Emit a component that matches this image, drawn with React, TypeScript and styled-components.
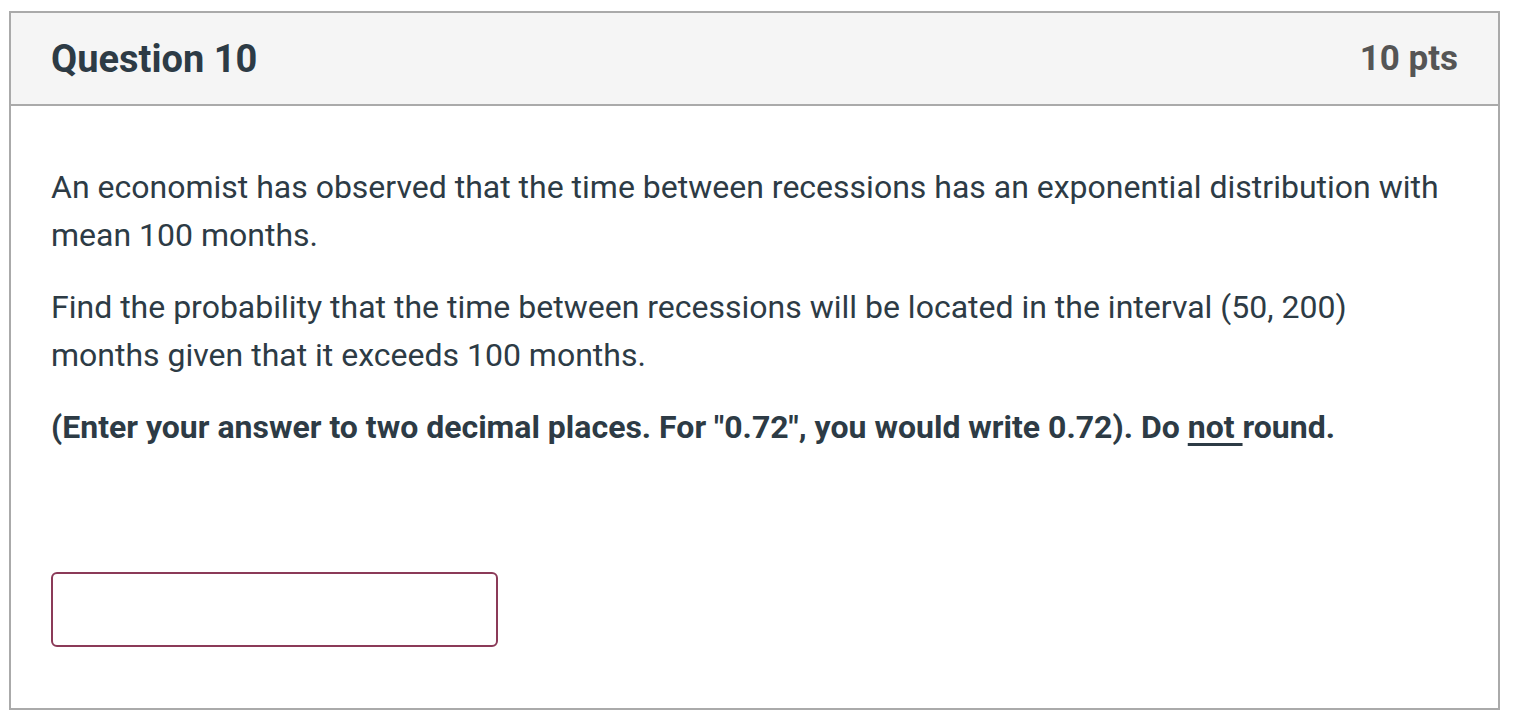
import React from "react";
import styled, { createGlobalStyle } from "styled-components";

const Global = createGlobalStyle`
  html, body {
    margin: 0;
    padding: 0;
    background: #fff;
  }
  body {
    font-family: Roboto, "Liberation Sans", sans-serif;
    color: #2d3b45;
  }
`;

const Card = styled.section`
  margin: 11px 0 0 9px;
  width: 1491px;
  height: 699px;
  box-sizing: border-box;
  border: 2px solid #aaaaaa;
  display: flex;
  flex-direction: column;
`;

const Header = styled.header`
  height: 93px;
  box-sizing: border-box;
  background: #f5f5f5;
  border-bottom: 2px solid #aaaaaa;
  display: flex;
  align-items: center;
  justify-content: space-between;
  padding: 0 40px 0 40px;
`;

const Title = styled.h2`
  margin: 0;
  font-size: 38px;
  font-weight: 700;
  color: #2d3b45;
`;

const Points = styled.span`
  font-size: 35px;
  font-weight: 700;
  color: #555555;
`;

const Body = styled.div`
  padding: 57px 40px 0 40px;
`;

const Para = styled.p<{ $bold?: boolean }>`
  margin: 0 0 24px 0;
  font-size: 32px;
  line-height: 48px;
  font-weight: ${(p) => (p.$bold ? 700 : 400)};
`;

const Under = styled.span`
  text-decoration: underline;
  text-underline-offset: 5px;
`;

const Answer = styled.input`
  display: block;
  margin-top: 121px;
  width: 447px;
  height: 75px;
  box-sizing: border-box;
  border: 2px solid #8b3a58;
  border-radius: 6px;
  background: #fff;
  outline: none;
  font-size: 28px;
  padding: 0 12px;
`;

export default function App() {
  return (
    <>
      <Global />
      <Card>
        <Header>
          <Title>Question 10</Title>
          <Points>10 pts</Points>
        </Header>
        <Body>
          <Para>
            An economist has observed that the time between recessions has an
            exponential distribution with mean 100 months.
          </Para>
          <Para>
            Find the probability that the time between recessions will be
            located in the interval (50, 200) months given that it exceeds 100
            months.
          </Para>
          <Para $bold>
            (Enter your answer to two decimal places. For "0.72", you would
            write 0.72). Do <Under>not </Under>round.
          </Para>
          <Answer type="text" aria-label="Answer" />
        </Body>
      </Card>
    </>
  );
}
